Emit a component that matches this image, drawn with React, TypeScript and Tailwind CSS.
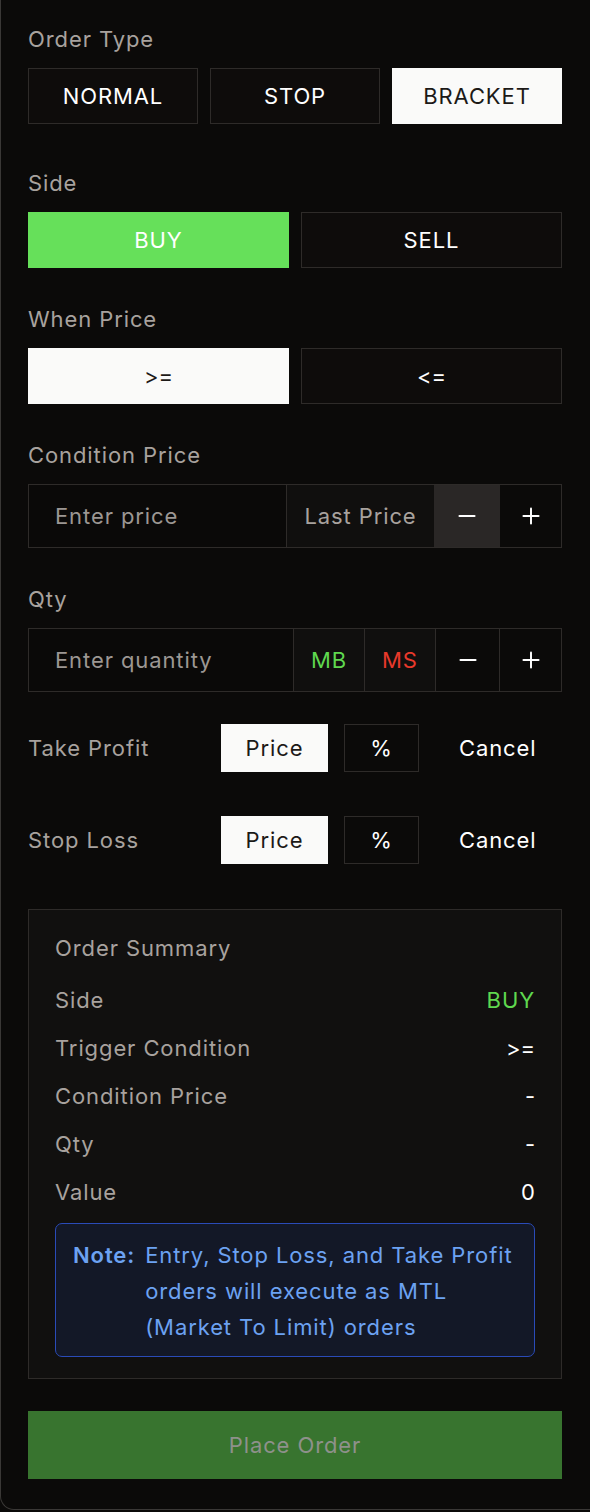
import { Minus, Plus } from 'lucide-react';

const label = 'h-[30px] text-[22px] leading-[30px] text-[#a8a29e]';

function Label({ children }: { children: React.ReactNode }) {
  return <div className={label}>{children}</div>;
}

function Toggle({ text, active, green }: { text: string; active?: boolean; green?: boolean }) {
  if (green) {
    return (
      <button className="flex h-[56px] items-center justify-center bg-[#66e05a] text-[22px] text-white">
        {text}
      </button>
    );
  }
  return (
    <button
      className={
        active
          ? 'flex h-[56px] items-center justify-center bg-[#fafaf9] text-[22px] text-[#1c1917]'
          : 'flex h-[56px] items-center justify-center border border-[#2e2b29] bg-[#0e0c0b] text-[22px] text-white'
      }
    >
      {text}
    </button>
  );
}

function SummaryRow({ k, v, green }: { k: string; v: string; green?: boolean }) {
  return (
    <div className="flex h-[30px] items-center justify-between text-[22px] leading-[30px]">
      <span className="text-[#a8a29e]">{k}</span>
      <span className={green ? 'text-[#5fd84f]' : 'tracking-normal text-white'}>{v}</span>
    </div>
  );
}

function TargetRow({ name }: { name: string }) {
  return (
    <div className="flex h-[48px] items-center">
      <span className="w-[193px] text-[22px] text-[#a8a29e]">{name}</span>
      <button className="flex h-[48px] w-[107px] items-center justify-center bg-[#fafaf9] text-[22px] text-[#1c1917]">
        Price
      </button>
      <button className="ml-[16px] flex h-[48px] w-[75px] items-center justify-center border border-[#2e2b29] text-[22px] text-white">
        %
      </button>
      <button className="ml-[40px] text-[22px] text-white">Cancel</button>
    </div>
  );
}

export default function App() {
  return (
    <div className="min-h-[1512px] bg-[#0b0a09] font-['Inter',sans-serif] tracking-[0.9px]">
      <div className="w-[590px] rounded-bl-[14px] border-b border-l border-[#3a3836] bg-[#0b0a09] pl-[27px] pr-[28px] pt-[24px] pb-[30px]">
        {/* order type */}
        <Label>Order Type</Label>
        <div className="mt-[14px] grid grid-cols-3 gap-3">
          <Toggle text="NORMAL" />
          <Toggle text="STOP" />
          <Toggle text="BRACKET" active />
        </div>

        <div className="mt-[44px]">
          <Label>Side</Label>
        </div>
        <div className="mt-[14px] grid grid-cols-2 gap-3">
          <Toggle text="BUY" green />
          <Toggle text="SELL" />
        </div>

        <div className="mt-[36px]">
          <Label>When Price</Label>
        </div>
        <div className="mt-[14px] grid grid-cols-2 gap-3 tracking-normal">
          <Toggle text=">=" active />
          <Toggle text="<=" />
        </div>

        <div className="mt-[36px]">
          <Label>Condition Price</Label>
        </div>
        <div className="mt-[14px] flex h-[64px] border border-[#2e2b29] bg-[#0a0908]">
          <div className="flex flex-1 items-center pl-[26px] text-[22px] text-[#9c9793]">Enter price</div>
          <div className="flex w-[148px] items-center justify-center border-l border-[#2e2b29] bg-[#100f0e] text-[22px] text-[#a8a29e]">
            Last Price
          </div>
          <div className="flex w-[66px] items-center justify-center bg-[#2a2726] text-white">
            <Minus size={26} strokeWidth={1.8} />
          </div>
          <div className="flex w-[61px] items-center justify-center bg-[#0b0a09] text-white">
            <Plus size={26} strokeWidth={1.8} />
          </div>
        </div>

        <div className="mt-[36px]">
          <Label>Qty</Label>
        </div>
        <div className="mt-[14px] flex h-[64px] border border-[#2e2b29] bg-[#0a0908]">
          <div className="flex flex-1 items-center pl-[26px] text-[22px] text-[#9c9793]">Enter quantity</div>
          <div className="flex w-[71px] items-center justify-center border-l border-[#2e2b29] bg-[#100f0e] text-[22px] text-[#5fd84f]">
            MB
          </div>
          <div className="flex w-[71px] items-center justify-center border-l border-[#2e2b29] bg-[#100f0e] text-[22px] text-[#e8392b]">
            MS
          </div>
          <div className="flex w-[64px] items-center justify-center border-l border-[#2e2b29] bg-[#0b0a09] text-white">
            <Minus size={26} strokeWidth={1.8} />
          </div>
          <div className="flex w-[62px] items-center justify-center border-l border-[#2e2b29] bg-[#0b0a09] text-white">
            <Plus size={26} strokeWidth={1.8} />
          </div>
        </div>

        <div className="mt-[32px]">
          <TargetRow name="Take Profit" />
        </div>
        <div className="mt-[44px]">
          <TargetRow name="Stop Loss" />
        </div>

        {/* summary */}
        <div className="mt-[45px] border border-[#2e2b29] bg-[#11100f] px-[26px] pt-[23px] pb-[21px]">
          <div className="h-[30px] text-[22px] leading-[30px] text-[#a8a29e]">Order Summary</div>
          <div className="mt-[22px] flex flex-col gap-[18px]">
            <SummaryRow k="Side" v="BUY" green />
            <SummaryRow k="Trigger Condition" v=">=" />
            <SummaryRow k="Condition Price" v="-" />
            <SummaryRow k="Qty" v="-" />
            <SummaryRow k="Value" v="0" />
          </div>
          <div className="mt-[16px] flex rounded-[7px] border-[1.5px] border-[#2a4bb8] bg-[#131827] px-[17px] pt-[13px] pb-[11px] text-[22px] leading-[36px] text-[#6ca2f2]">
            <span className="mr-[10px] font-semibold">Note:</span>
            <span>
              Entry, Stop Loss, and Take Profit orders will execute as MTL (Market To Limit) orders
            </span>
          </div>
        </div>

        <button className="mt-[32px] flex h-[68px] w-full items-center justify-center bg-[#38742f] text-[22px] text-[#8e918b]">
          Place Order
        </button>
      </div>
    </div>
  );
}
